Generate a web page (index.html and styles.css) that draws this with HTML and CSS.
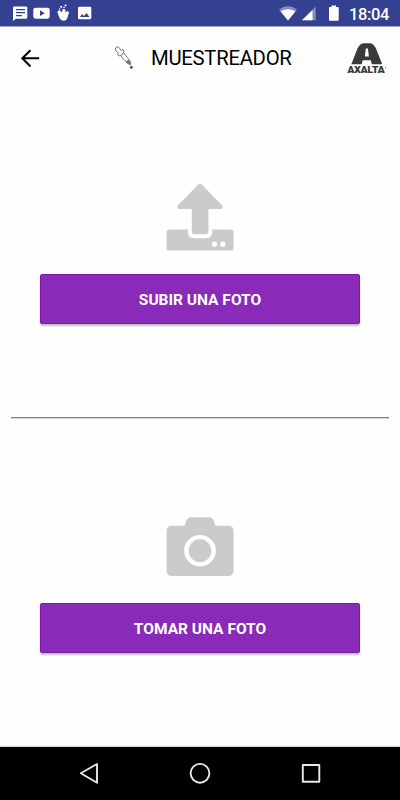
FILE: index.html
```html
<!DOCTYPE html>
<html lang="es">
<head>
<meta charset="utf-8">
<title>Muestreador</title>
<link rel="stylesheet" href="styles.css">
</head>
<body>
<div class="screen">
  <div class="status">
    <svg class="status-left" width="110" height="26" viewBox="0 0 110 26" fill="#fff">
      <path fill-rule="evenodd" d="M14 6.500H26Q27.300 6.500 27.300 7.800V17.500Q27.300 18.700 26 18.700H16L13 21V7.500Q13 6.500 14 6.500ZM16 9V10.300H25V9ZM16 12V13.300H25V12ZM16 15V16.300H22V15Z"/>
      <path fill-rule="evenodd" d="M36 7.700H47Q49.700 7.700 49.700 10V16.300Q49.700 18.700 47 18.700H36Q33.300 18.700 33.300 16.300V10Q33.300 7.700 36 7.700ZM40 10.300V16L44.700 13.200Z"/>
      <path d="M57.300 12L59 10L62 12.300L62.800 8.800L65.300 9.500L65.500 12.300L67.800 11L69 12.500L67.500 17.500Q66.500 20.800 63.500 20.800Q60.500 20.500 59.300 17.500Z"/>
      <circle cx="61.200" cy="6.800" r="1.100"/><circle cx="65.500" cy="5.500" r="1"/><circle cx="59.800" cy="9" r=".8"/><circle cx="64" cy="7.500" r=".8"/>
      <path fill-rule="evenodd" d="M79.500 6.700H90Q91.300 6.700 91.300 8V18Q91.300 19.300 90 19.300H79.500Q78 19.300 78 18V8Q78 6.700 79.500 6.700ZM80 17H89.500L86.500 13L84 16L82 14Z"/>
    </svg>
    <svg class="status-right" width="75" height="26" viewBox="270 0 75 26" fill="#fff">
      <path opacity=".4" d="M279 9.500Q288 3 297 9.500L288 20.500Z"/>
      <path d="M280.500 11.300Q288 7 295.500 11.300L288 20.500Z"/>
      <path opacity=".4" d="M302 20.300H315.700V6.500Z"/>
      <path d="M302 20.300H312.500V10Z"/>
      <path d="M331.500 5.500H336V7H338Q338.700 7 338.700 7.800V20Q338.700 20.800 338 20.800H329.700Q329 20.800 329 20V7.800Q329 7 329.700 7H331.500Z"/>
    </svg>
    <span class="clock">18:04</span>
  </div>

  <header class="header">
    <svg class="back" width="24" height="24" viewBox="0 0 24 24" fill="none" stroke="#000" stroke-width="2"><path d="M21.200 12.300H4.500M12.500 4.200L4.300 12.300L12.500 20.500"/></svg>
    <svg class="dropper" width="24" height="28" viewBox="112 44 24 28" fill="none" stroke="#777" stroke-width="1">
      <path d="M115.500 48Q117.500 45.500 119.500 48L121 50.500L123 49.500L124 51L122.500 54.500L119 56L117.500 54.500L118.500 53L116 51Q115 49.500 115.500 48Z"/>
      <path d="M120.500 55.500L127.500 63.500L130.500 64.500L130 61L123.500 52.500"/>
      <path d="M126.500 61L129.500 60.500L130.500 64L128.500 63.800Z" fill="#777"/>
      <circle cx="131.300" cy="67.300" r="1.300" fill="#555" stroke="#555" stroke-width=".5"/>
    </svg>
    <h1 class="title">MUESTREADOR</h1>
    <svg class="logo" width="42" height="36" viewBox="346 40 42 36" fill="#3a3a3a">
      <path fill-rule="evenodd" d="M351.300 64.300L357.500 48.500Q360 43.300 364 43.300H369.500Q373.500 43.300 376 48.500L382.200 64.300H371.800L370.800 60.300H362.700L361.700 64.300ZM365.800 48.500L364.800 56.500H368.900L367.900 48.500Z"/>
      <text class="brand" x="347.500" y="73" textLength="37" lengthAdjust="spacingAndGlyphs">AXALTA</text>
      <circle cx="385.500" cy="67.800" r=".5"/>
    </svg>
  </header>

  <main>
    <section class="option">
      <svg width="90" height="85" viewBox="155 175 90 85" fill="#cbcbcb">
        <path fill-rule="evenodd" d="M169 229.500H188V232.500Q188 238.200 194 238.200H206Q212.200 238.200 212.200 232.500V229.500H231Q233.600 229.500 233.600 232V248Q233.600 250.600 231 250.600H169Q166.600 250.600 166.600 248V232Q166.600 229.500 169 229.500ZM214.500 241.600a2.700 2.700 0 1 0 .01 0ZM222.800 241.600a2.700 2.700 0 1 0 .01 0Z"/>
        <path d="M198.300 184.600Q200 183 201.700 184.600L222 205.200Q223.500 207 222 208.500Q221.500 209 220.500 209H208.400V231.500Q208.400 234.200 205.700 234.200H194.500Q191.800 234.200 191.800 231.500V209H179.500Q178.500 209 178 208.500Q176.500 207 178 205.200Z"/>
      </svg>
      <button class="action">SUBIR UNA FOTO</button>
    </section>
    <hr class="divider">
    <section class="option option-camera">
      <svg width="90" height="85" viewBox="155 505 90 85" fill="#cbcbcb">
        <path d="M172 525.700H184.500L186 521.500Q187.300 517.200 191.500 517.200H209Q212.700 517.200 214 521.500L215.500 525.700H228Q233.600 525.700 233.600 531V570.500Q233.600 576 228 576H172Q166.600 576 166.600 570.500V531Q166.600 525.700 172 525.700Z"/>
        <circle cx="200" cy="550.700" r="13.600" fill="none" stroke="#fff" stroke-width="4.400"/>
      </svg>
      <button class="action">TOMAR UNA FOTO</button>
    </section>
  </main>

  <nav class="navbar">
    <svg width="400" height="53" viewBox="0 747 400 53" fill="none" stroke="#e8e8e8" stroke-width="1.900" stroke-linejoin="round">
      <path d="M80.800 773.300L97 764V782.700Z"/>
      <circle cx="200" cy="773.300" r="9.400"/>
      <rect x="302.800" y="765" width="16.500" height="16.800"/>
    </svg>
  </nav>
</div>
</body>
</html>
```
FILE: styles.css
```css
* { box-sizing: border-box; }
body { margin: 0; background: #fefefe; font-family: Roboto, sans-serif; }
svg { display: block; flex: none; }
.screen { width: 400px; height: 800px; display: flex; flex-direction: column; overflow: hidden; }
.status {
  height: 26px; flex: none; display: flex; align-items: center;
  background: #344191; color: #fff; box-shadow: 0 1px 0 #9da3c8;
}
.status-right { margin-left: 160px; }
.clock { margin-left: 4px; font-size: 16.500px; font-weight: 500; letter-spacing: -.4px; line-height: 26px; padding-top: 3px; white-space: nowrap; }
.header { height: 64px; flex: none; display: flex; align-items: center; }
.back { margin-left: 18px; }
.dropper { margin-left: 70px; }
.title { margin: 0 0 0 15px; width: 195px; font-size: 20.300px; font-weight: 400; letter-spacing: -.27px; line-height: 28px; color: #000; }
.brand { font: 900 8.500px Roboto, sans-serif; stroke: #3a3a3a; stroke-width: .2px; }
main { flex: 1; }
.option { padding: 85px 40px 0; height: 327px; display: flex; flex-direction: column; align-items: center; }
.action {
  width: 320px; height: 50px; flex: none; margin: 14px 0 0; padding: 2px 0 0;
  border: 1px solid #7f16af; border-radius: 2px; background: #892ab8; color: #fff;
  font: 700 15.500px Roboto, sans-serif; box-shadow: 0 2px 2px rgba(0, 0, 0, .25);
}
.divider { height: 2px; margin: 0 11px; border: 0; background: linear-gradient(#a367cd 50%, #dccbe4 50%); }
.option-camera { padding-top: 86px; height: 326px; }
.option-camera .action { margin-top: 13.400px; padding-top: 1px; }
.navbar { height: 53px; flex: none; background: #000; box-shadow: 0 -1px 0 #d4d4d4; }
```
